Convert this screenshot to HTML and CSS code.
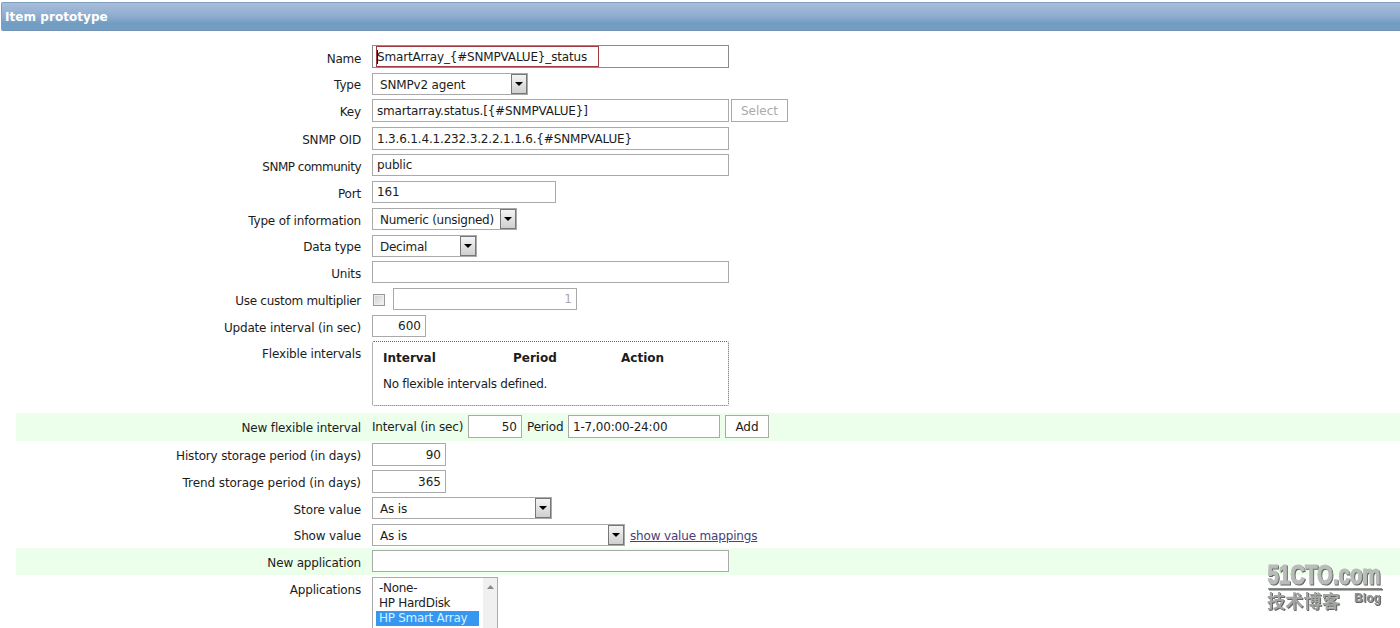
FILE: index.html
```
<!DOCTYPE html>
<html lang="en">
<head>
    <meta charset="UTF-8">
    <meta name="viewport" content="width=device-width, initial-scale=1.0">
    <title>Item prototype</title>
    <link rel="stylesheet" href="styles.css">
</head>
<body>
    <div class="header">Item prototype</div>

    <form class="item-form">
        <div class="row">
            <label class="row-label lower tight">Name</label>
            <div class="row-field">
                <div class="name-wrap">
                    <input class="text-input wide focused" type="text" value="SmartArray_{#SNMPVALUE}_status">
                    <span class="name-mark"></span>
                </div>
            </div>
        </div>
        <div class="row">
            <label class="row-label upper">Type</label>
            <div class="row-field">
                <div class="select select-type"><span>SNMPv2 agent</span><i class="arrow"></i></div>
            </div>
        </div>
        <div class="row">
            <label class="row-label">Key</label>
            <div class="row-field">
                <input class="text-input wide tall" type="text" value="smartarray.status.[{#SNMPVALUE}]">
                <button class="btn btn-select tall" type="button" disabled>Select</button>
            </div>
        </div>
        <div class="row">
            <label class="row-label">SNMP OID</label>
            <div class="row-field">
                <input class="text-input wide tall" type="text" value="1.3.6.1.4.1.232.3.2.2.1.1.6.{#SNMPVALUE}">
            </div>
        </div>
        <div class="row">
            <label class="row-label tighter">SNMP community</label>
            <div class="row-field">
                <input class="text-input wide" type="text" value="public">
            </div>
        </div>
        <div class="row">
            <label class="row-label">Port</label>
            <div class="row-field">
                <input class="text-input medium" type="text" value="161">
            </div>
        </div>
        <div class="row">
            <label class="row-label">Type of information</label>
            <div class="row-field">
                <div class="select select-info tight"><span>Numeric (unsigned)</span><i class="arrow"></i></div>
            </div>
        </div>
        <div class="row">
            <label class="row-label upper">Data type</label>
            <div class="row-field">
                <div class="select select-data tight"><span>Decimal</span><i class="arrow"></i></div>
            </div>
        </div>
        <div class="row">
            <label class="row-label">Units</label>
            <div class="row-field">
                <input class="text-input wide" type="text" value="">
            </div>
        </div>
        <div class="row">
            <label class="row-label tight">Use custom multiplier</label>
            <div class="row-field">
                <span class="checkbox"></span>
                <input class="text-input medium number" type="text" value="1" disabled>
            </div>
        </div>
        <div class="row">
            <label class="row-label">Update interval (in sec)</label>
            <div class="row-field">
                <input class="text-input tiny number" type="text" value="600">
            </div>
        </div>
        <div class="row">
            <label class="row-label">Flexible intervals</label>
            <div class="row-field">
                <div class="intervals">
                    <div class="intervals-head">
                        <span>Interval</span>
                        <span>Period</span>
                        <span>Action</span>
                    </div>
                    <div class="tight">No flexible intervals defined.</div>
                </div>
            </div>
        </div>
        <div class="row row-new">
            <label class="row-label">New flexible interval</label>
            <div class="row-field">
                <span class="inline-label label-interval">Interval (in sec)</span>
                <input class="text-input tiny tall number" type="text" value="50">
                <span class="inline-label label-period">Period</span>
                <input class="text-input period tall" type="text" value="1-7,00:00-24:00">
                <button class="btn btn-add tall" type="button">Add</button>
            </div>
        </div>
        <div class="row">
            <label class="row-label">History storage period (in days)</label>
            <div class="row-field">
                <input class="text-input small tall number" type="text" value="90">
            </div>
        </div>
        <div class="row">
            <label class="row-label loose">Trend storage period (in days)</label>
            <div class="row-field">
                <input class="text-input small tall number" type="text" value="365">
            </div>
        </div>
        <div class="row">
            <label class="row-label loose">Store value</label>
            <div class="row-field">
                <div class="select select-store"><span>As is</span><i class="arrow"></i></div>
            </div>
        </div>
        <div class="row">
            <label class="row-label upper">Show value</label>
            <div class="row-field">
                <div class="select select-show"><span>As is</span><i class="arrow"></i></div>
                <a class="mappings" href="#">show value mappings</a>
            </div>
        </div>
        <div class="row row-new">
            <label class="row-label">New application</label>
            <div class="row-field">
                <input class="text-input wide" type="text" value="">
            </div>
        </div>
        <div class="row">
            <label class="row-label">Applications</label>
            <div class="row-field">
                <div class="listbox">
                    <div class="options">
                        <div>-None-</div>
                        <div>HP HardDisk</div>
                        <div class="selected">HP Smart Array</div>
                    </div>
                    <div class="scrollbar">
                        <svg class="scroll-up" width="7" height="4" viewBox="0 0 7 4"><path d="M0 4 L3.5 0 L7 4 Z"/></svg>
                    </div>
                </div>
            </div>
        </div>
    </form>

    <svg class="watermark" width="130" height="60" viewBox="0 0 130 60">
        <text class="mark-site" x="8.5" y="26.5" textLength="113" lengthAdjust="spacingAndGlyphs">51CTO.com</text>
        <rect class="mark-line" x="9" y="31" width="114" height="1.5"/>
        <text class="mark-cn" x="8" y="50.5" textLength="73" lengthAdjust="spacingAndGlyphs">技术博客</text>
        <text class="mark-blog" x="95" y="44.5" textLength="27" lengthAdjust="spacingAndGlyphs">Blog</text>
    </svg>
</body>
</html>
```
FILE: styles.css
```
* {
    box-sizing: border-box;
}
body {
    margin: 0;
    height: 628px;
    overflow: hidden;
    position: relative;
    background: #fff;
    color: #1c1c1c;
    font-family: "DejaVu Sans", Verdana, sans-serif;
    font-size: 12px;
    letter-spacing: -0.17px;
}
.header {
    height: 29px;
    margin: 2px 0 0 1px;
    padding-left: 3px;
    border: 1px solid #7d9fc0;
    border-right: none;
    border-bottom-color: #7293b3;
    border-radius: 2px 0 0 2px;
    background: linear-gradient(#a9bddb, #8caccf 50%, #729dc2 75%, #749fc3);
    color: #fff;
    font-weight: bold;
    letter-spacing: 0.05px;
    line-height: 29px;
}
.item-form {
    display: grid;
    grid-template-rows: 28px 26px 28px 27px 27px 27px 27px 26px 27px 27px 26px 74px 28px 27px 27px 27px 26px 27px 53px;
    margin: 12px 0 0 16px;
}
.row {
    display: flex;
    padding-top: 2px;
}
.row-new {
    background: #ebffeb;
}
.row-label {
    width: 345px;
    line-height: 26px;
    text-align: right;
}
.row-label.lower {
    line-height: 28px;
}
.row-label.upper {
    line-height: 24px;
}
.loose {
    letter-spacing: -0.07px;
}
.tight {
    letter-spacing: -0.27px;
}
.tighter {
    letter-spacing: -0.5px;
}
.row-field {
    display: flex;
    align-items: flex-start;
    margin-left: 11px;
}
.text-input {
    height: 22px;
    padding: 0 4px 0 4px;
    border: 1px solid #aaa;
    background: #fff;
    color: #1c1c1c;
    font: inherit;
    letter-spacing: inherit;
}
.text-input:disabled {
    color: #aaa;
}
.wide {
    width: 357px;
}
.medium {
    width: 184px;
}
.small {
    width: 74px;
}
.tiny {
    width: 54px;
}
.period {
    width: 152px;
}
.number {
    letter-spacing: 0;
    text-align: right;
}
.focused {
    display: block;
    height: 23px;
    border-color: #8b8b8b;
}
.name-wrap {
    position: relative;
}
.name-mark {
    position: absolute;
    left: 4px;
    top: 1px;
    width: 223px;
    height: 21px;
    border: 1px solid #a03a40;
}
/* text caret */
.name-mark::before {
    content: "";
    position: absolute;
    left: 0;
    top: 3px;
    width: 1px;
    height: 14px;
    background: #111;
}
.select {
    display: flex;
    justify-content: space-between;
    height: 22px;
    padding-left: 7px;
    border: 1px solid #aaa;
    background: #fff;
    line-height: 22px;
    white-space: nowrap;
}
.select-type {
    width: 156px;
}
.select-info {
    width: 145px;
}
.select-data {
    width: 105px;
}
.select-store {
    width: 180px;
}
.select-show {
    width: 253px;
}
.arrow {
    display: flex;
    align-items: center;
    justify-content: center;
    width: 16px;
    height: 20px;
    border: 1px solid #777;
    background: linear-gradient(#f4f4f4, #cfcfcf);
}
.arrow::before {
    content: "";
    border: 4px solid transparent;
    border-top: 4px solid #000;
    border-bottom: none;
}
.btn {
    height: 22px;
    padding: 1px 0 0;
    border: 1px solid #aaa;
    background: #fff;
    color: #1c1c1c;
    font: inherit;
}
.btn:disabled {
    color: #aaa;
}
.btn-select {
    width: 57px;
    margin-left: 2px;
}
.btn-add {
    width: 44px;
    margin-left: 5px;
}
.tall {
    height: 23px;
}
.checkbox {
    width: 12px;
    height: 12px;
    margin: 6px 8px 0 1px;
    border: 1px solid #999;
    background: linear-gradient(135deg, #cfcfcf, #f6f6f6);
    box-shadow: inset 0 0 0 1px #eee;
}
.intervals {
    width: 357px;
    height: 65px;
    padding: 3px 10px;
    border: 1px dotted #666;
    border-radius: 2px;
    line-height: 26px;
}
.intervals-head {
    display: grid;
    grid-template-columns: 130px 108px 1fr;
    font-weight: bold;
    letter-spacing: 0;
}
.inline-label {
    line-height: 24px;
    white-space: nowrap;
}
.label-interval {
    width: 96px;
}
.label-period {
    width: 46px;
    padding-left: 5px;
}
.mappings {
    margin-left: 5px;
    color: #48407a;
    line-height: 24px;
}
.listbox {
    display: flex;
    width: 126px;
    height: 60px;
    border: 1px solid #aaa;
    background: #fff;
}
.options {
    width: 110px;
    padding: 3px 4px 0 3px;
    letter-spacing: -0.3px;
    line-height: 15px;
    white-space: nowrap;
}
.options div {
    padding-left: 3px;
}
.options .selected {
    background: #3597f0;
    color: #d9f0ff;
}
.scrollbar {
    display: flex;
    flex: 1;
    justify-content: center;
    padding-top: 7px;
    background: #f0f0f0;
}
.scroll-up {
    fill: #8a8a8a;
}
.watermark {
    position: absolute;
    left: 1259px;
    top: 557px;
    overflow: visible;
    letter-spacing: 0;
    fill: #b9bdb9;
    filter: drop-shadow(1px 1px 0 #666);
}
.mark-site {
    font: bold 28px "Liberation Sans", sans-serif;
    stroke: #b9bdb9;
    stroke-width: 1.2px;
}
.mark-line {
    fill: #888;
}
.mark-cn {
    font: bold 18px "Noto Sans CJK SC", sans-serif;
    fill: #a2a5a2;
}
.mark-blog {
    font: bold 13px "Liberation Sans", sans-serif;
    fill: #909390;
}
```
